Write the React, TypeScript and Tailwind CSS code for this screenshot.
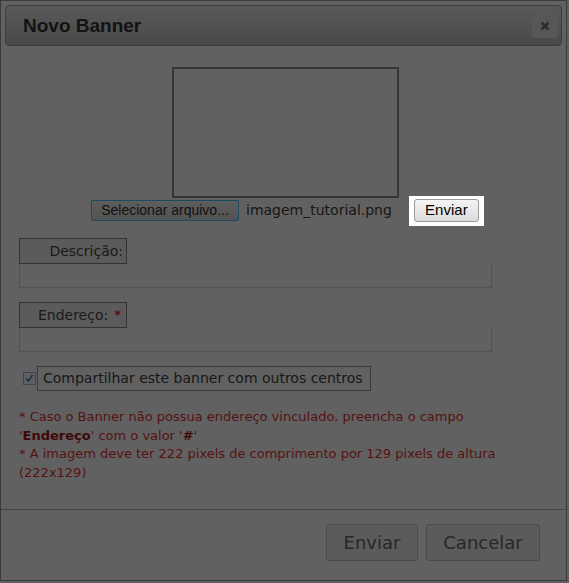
import React from "react";

export default function App() {
  const verdana = { fontFamily: '"DejaVu Sans", Verdana, sans-serif' };
  const arial = { fontFamily: '"Liberation Sans", Arial, sans-serif' };
  return (
    <div className="w-[569px] h-[583px] bg-[#5f5f5f]">
      <div
        className="w-[567px] h-[581px] border border-[#3a3a3a] bg-[#616161] flex flex-col"
        style={verdana}
      >
        {/* header */}
        <div className="mx-[4px] mt-[4px] h-[41px] rounded-[4px] border border-[#3d3d3d] bg-gradient-to-b from-[#595959] to-[#494949] flex items-center justify-between pl-[17px] pr-[3px]">
          <span className="text-[19px] font-bold text-[#131313] mt-[2px]" style={arial}>
            Novo Banner
          </span>
          <div className="w-[26px] h-[24px] rounded-[3px] bg-[#575757] flex items-center justify-center">
            <svg width="10" height="10" viewBox="0 0 10 10">
              <path d="M1.5 1.5 L8.5 8.5 M8.5 1.5 L1.5 8.5" stroke="#2e2e2e" strokeWidth="2.6" />
            </svg>
          </div>
        </div>

        {/* image box */}
        <div className="ml-[171px] mt-[21px] w-[227px] h-[131px] border-2 border-[#363636]" />

        {/* file row */}
        <div className="flex items-center mt-[-3px] h-[31px]">
          <div
            className="ml-[90px] w-[148px] h-[21px] border border-[#1b4a63] rounded-[2px] bg-gradient-to-b from-[#5d5d5d] to-[#535353] flex items-center justify-center text-[14px] text-[#111]"
            style={arial}
          >
            Selecionar arquivo...
          </div>
          <span className="ml-[7px] text-[14px] text-[#161616]" style={verdana}>
            imagem_tutorial.png
          </span>
          <div className="ml-[17px] w-[75px] h-[30px] bg-white flex items-center justify-center">
            <div
              className="w-[65px] h-[23px] rounded-[3px] border border-[#9a9a9a] bg-gradient-to-b from-[#f4f4f4] to-[#dcdcdc] flex items-center justify-center text-[15px] text-black"
              style={arial}
            >
              Enviar
            </div>
          </div>
        </div>

        {/* Descrição */}
        <div className="ml-[18px] mt-[12px]">
          <div className="w-[108px] h-[26px] border border-[#333] bg-[#5b5b5b] flex items-center justify-end pr-[3px] text-[14px] text-[#191919]">
            Descrição:
          </div>
          <div className="w-[473px] h-[24px] border border-[#525252] border-t-0 bg-[#616161]" />
        </div>

        {/* Endereço */}
        <div className="ml-[18px] mt-[14px]">
          <div className="w-[108px] h-[26px] border border-[#333] bg-[#5b5b5b] flex items-center justify-end pr-[5px] text-[14px] text-[#191919]">
            Endereço:<span className="ml-[6px] text-[13px] text-[#5a0c0c] font-bold">*</span>
          </div>
          <div className="w-[473px] h-[24px] border border-[#525252] border-t-0 bg-[#616161]" />
        </div>

        {/* checkbox */}
        <div className="ml-[22px] mt-[14px] flex items-center">
          <div className="w-[13px] h-[13px] border border-[#3c4456] bg-[#5d5f64] flex items-center justify-center">
            <svg width="9" height="9" viewBox="0 0 9 9">
              <path d="M1.5 4.5 L3.5 7 L7.5 1" stroke="#1f2a48" strokeWidth="1.5" fill="none" />
            </svg>
          </div>
          <div className="ml-[1px] h-[25px] w-[334px] border border-[#3a3a3a] flex items-center pl-[5px] text-[14px] text-[#171717]">
            Compartilhar este banner com outros centros
          </div>
        </div>

        {/* notes */}
        <div className="ml-[18px] mt-[17px] text-[13px] leading-[18.5px] text-[#561212]">
          <div>* Caso o Banner não possua endereço vinculado, preencha o campo</div>
          <div>
            '<b className="text-[#3e0808]">Endereço</b>' com o valor '<b className="text-[#3e0808]">#</b>'
          </div>
          <div>* A imagem deve ter 222 pixels de comprimento por 129 pixels de altura</div>
          <div>(222x129)</div>
        </div>

        {/* separator */}
        <div className="mt-[27px] h-px w-[565px] bg-[#444]" />

        {/* footer */}
        <div className="flex justify-end gap-[8px] pr-[26px] mt-[14px]">
          <div className="w-[92px] h-[37px] rounded-[3px] border border-[#4b4b4b] bg-[#5b5b5b] flex items-center justify-center text-[18px] text-[#272727]">
            Enviar
          </div>
          <div className="w-[114px] h-[37px] rounded-[3px] border border-[#4b4b4b] bg-[#5b5b5b] flex items-center justify-center text-[18px] text-[#272727]">
            Cancelar
          </div>
        </div>
      </div>
    </div>
  );
}
